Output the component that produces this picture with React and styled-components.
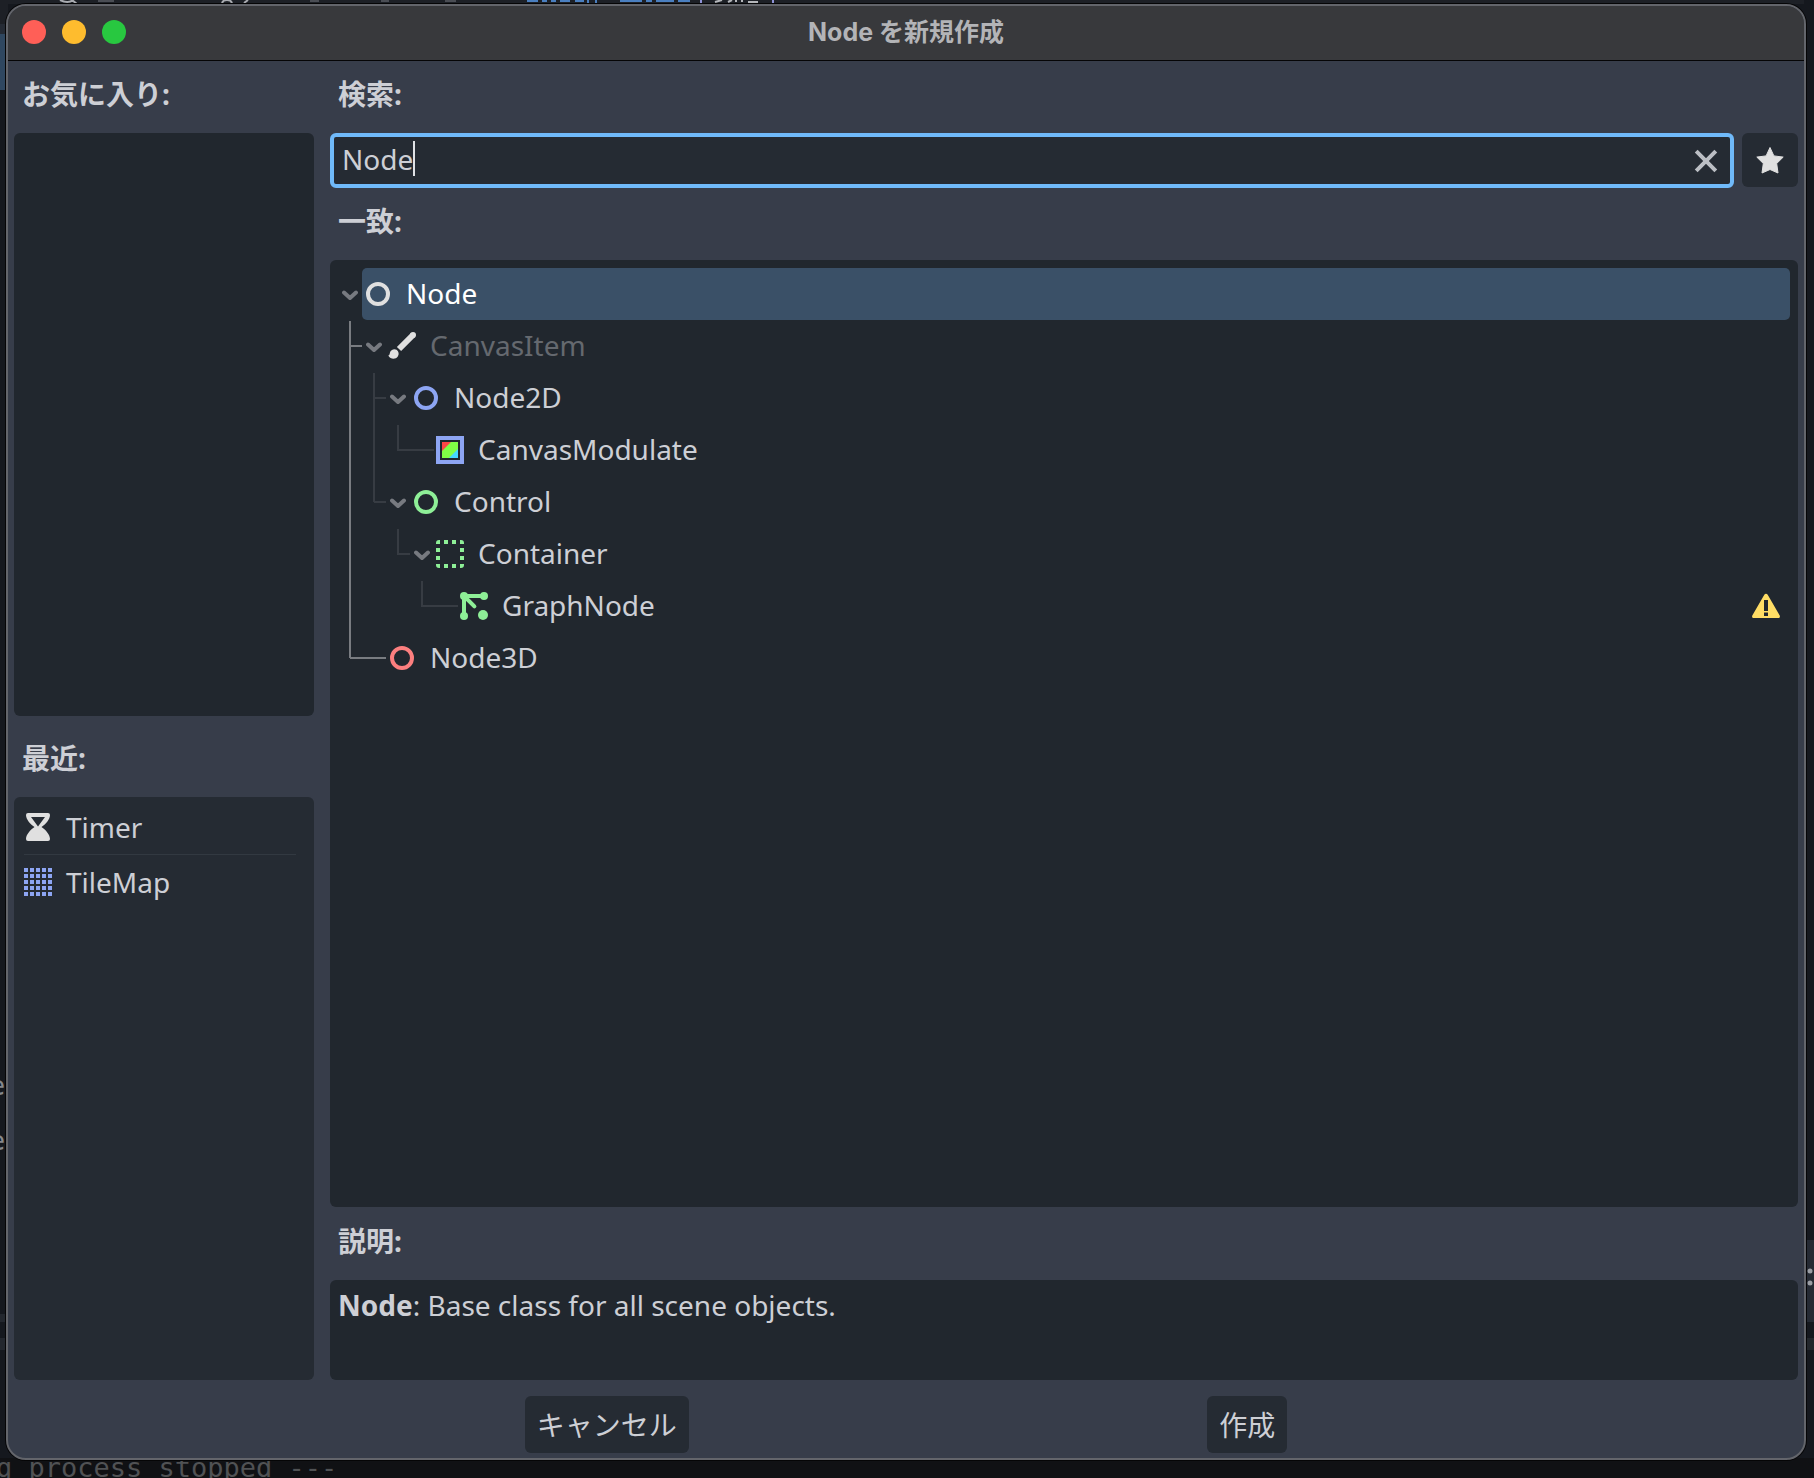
import React, { useState } from "react";
import styled, { createGlobalStyle } from "styled-components";

const GlobalStyle = createGlobalStyle`
  * {
    box-sizing: border-box;
  }

  body {
    margin: 0;
    background: #15181e;
    color: #cdcfd5;
    font-family: "Noto Sans", "Noto Sans CJK JP", sans-serif;
    font-size: 28px;
    line-height: 38px;
  }

  button,
  input {
    font: inherit;
    color: inherit;
  }

  ul {
    list-style: none;
    margin: 0;
    padding: 0;
  }
`;

const Desktop = styled.div`
  display: grid;
  min-height: 100vh;
  overflow: hidden;
`;

// the editor behind the dialog, only its edges can be seen
const Backdrop = styled.div`
  grid-area: 1 / 1;
  display: grid;
  grid-template-columns: 8px 1fr 10px;
  grid-template-rows: 1fr 20px;
  min-width: 0;
  background: #15181e;
`;

const EdgeColumn = styled.div`
  display: flex;
  flex-direction: column;
  overflow: hidden;
`;

const Strip = styled.div`
  flex: none;
  height: ${(p) => p.$height}px;
  overflow: hidden;
  background: ${(p) => p.$color || "transparent"};
  color: #85888d;
  font-family: "DejaVu Sans Mono", monospace;
  font-size: 27px;
  line-height: 34px;
  text-indent: -11px;
`;

const Console = styled.div`
  grid-column: 1 / -1;
  height: 20px;
  overflow: hidden;
  background: #101114;
  color: #505254;
  font-family: "DejaVu Sans Mono", monospace;
  font-size: 27px;
  line-height: 20px;
  white-space: pre;
  text-indent: -4px;
`;

const WindowArea = styled.div`
  grid-area: 1 / 1;
  z-index: 1;
  display: flex;
  min-width: 0;
  padding: 4px 8px 18px 6px;
`;

const Window = styled.main`
  flex: 1;
  min-width: 0;
  display: flex;
  flex-direction: column;
  overflow: hidden;
  border: 2px solid #63656b;
  border-radius: 20px;
  background: #373d4a;
  box-shadow: 0 0 0 1px #050506;
`;

const TitleBar = styled.header`
  display: grid;
  grid-template-columns: 1fr auto 1fr;
  align-items: center;
  height: 55px;
  padding: 0 14px 2px;
  border-bottom: 1px solid #050506;
  background: #38393c;
`;

const Lights = styled.div`
  display: flex;
  gap: 16px;
`;

const Light = styled.button`
  width: 24px;
  height: 24px;
  padding: 0;
  border: 0;
  border-radius: 50%;
  background: ${(p) => p.$color};
`;

const Title = styled.h1`
  margin: 0;
  color: #b3b4b7;
  font-family: Inter, "Noto Sans CJK JP", sans-serif;
  font-size: 25px;
  font-weight: 700;
  line-height: 32px;
`;

const Body = styled.div`
  flex: 1;
  display: grid;
  grid-template-columns: 300px 1fr;
  column-gap: 16px;
  padding: 7px 6px 0;
`;

const Column = styled.div`
  display: flex;
  flex-direction: column;
  gap: 8px;
  min-width: 0;
`;

const Section = styled.section`
  flex: 1 1 0;
  display: flex;
  flex-direction: column;
  gap: 8px;

  & + & {
    padding-top: 8px;
    flex-basis: 8px;
  }
`;

const Label = styled.label`
  display: block;
  height: 57px;
  margin: 0;
  padding: 7px 8px 0;
  font-size: 28px;
  font-weight: 700;
  line-height: 38px;
`;

const Panel = styled.div`
  flex: 1;
  border-radius: 6px;
  background: ${(p) => (p.$light ? "#252b33" : "#21272e")};
`;

const RecentList = styled.ul`
  padding: 3px 18px 0 10px;
`;

const RecentItem = styled.li`
  display: flex;
  align-items: center;
  gap: 14px;
  height: 54px;

  & + & {
    height: 55px;
    border-top: 1px solid #323941;
  }
`;

const SearchRow = styled.div`
  display: flex;
  gap: 8px;
  height: 54px;
`;

const SearchBox = styled.div`
  flex: 1;
  display: flex;
  align-items: center;
  height: 55px;
  min-width: 0;
  padding: 0 10px 4px 8px;
  border: 4px solid #70bafa;
  border-radius: 6px;
  background: #252b33;
`;

const SearchInput = styled.input`
  field-sizing: content;
  min-width: 1px;
  padding: 0;
  border: 0;
  outline: 0;
  background: none;
  caret-color: transparent;
`;

const Caret = styled.span`
  width: 2px;
  height: 35px;
  background: #e0e2e6;
`;

const ClearButton = styled.button`
  display: flex;
  margin-left: auto;
  padding: 4px 0 0;
  border: 0;
  background: none;
`;

const FavoriteButton = styled.button`
  display: flex;
  align-items: center;
  justify-content: center;
  width: 56px;
  height: 54px;
  padding: 0;
  border: 0;
  border-radius: 6px;
  background: #252b33;
`;

const TreePanel = styled(Panel)`
  padding: 8px;
`;

const Branch = styled.ul`
  padding-left: 24px;
`;

const TreeItem = styled.li`
  position: relative;

  /* vertical guide, stops in the middle of the row for the last child */
  ${Branch} > &::before {
    content: "";
    position: absolute;
    left: -13px;
    top: ${(p) => (p.$first ? 1 : 0)}px;
    width: 2px;
    height: ${(p) => (p.$last ? "26px" : "100%")};
    background: ${(p) => (p.$active ? "#797c81" : "#373c43")};
  }

  /* horizontal guide to the arrow or to the icon */
  ${Branch} > &::after {
    content: "";
    position: absolute;
    left: -12px;
    top: 25px;
    width: ${(p) => (p.$leaf ? 36 : 12)}px;
    height: 2px;
    background: ${(p) => (p.$active ? "#797c81" : "#373c43")};
  }
`;

const TreeRow = styled.div`
  display: flex;
  height: 52px;
`;

const Arrow = styled.button`
  display: flex;
  align-items: center;
  justify-content: center;
  width: 24px;
  padding: 0;
  border: 0;
  background: none;
  visibility: ${(p) => (p.$hidden ? "hidden" : "visible")};
`;

const RowContent = styled.div`
  flex: 1;
  display: flex;
  align-items: center;
  gap: 14px;
  padding: 0 10px 0 2px;
  border-radius: 5px;
  background: ${(p) => (p.$selected ? "#3a5067" : "transparent")};
  color: ${(p) => (p.$selected ? "#ffffff" : p.$disabled ? "#65696f" : "#cdcfd5")};
`;

const RowName = styled.span`
  flex: 1;
  padding-bottom: 2px;
`;

const Description = styled.p`
  height: 100px;
  margin: 0;
  padding: 6px 8px;
  border-radius: 6px;
  background: #21272e;
`;

const Footer = styled.footer`
  display: flex;
  gap: 8px;
  padding: 16px 6px 5px;

  &::before,
  &::after {
    content: "";
    flex: 1;
  }
`;

const Spacer = styled.span`
  flex: 1;
`;

const DialogButton = styled.button`
  height: 57px;
  padding: 0 12px;
  border: 0;
  border-radius: 6px;
  background: #252b33;
`;

const Svg = styled.svg`
  display: block;
  flex: none;
`;

const Icon = ({ children }) => (
  <Svg width="28" height="28" viewBox="0 0 28 28" aria-hidden="true">
    {children}
  </Svg>
);

const Ring = ({ color }) => (
  <Icon>
    <circle cx="14" cy="14" r="10" fill="none" stroke={color} strokeWidth="4" />
  </Icon>
);

const BrushIcon = () => (
  <Icon>
    <circle cx="25" cy="3" r="3" fill="#e0e0e0" />
    <path d="M25 3 11 17" stroke="#e0e0e0" strokeWidth="6" />
    <path
      fill="#e0e0e0"
      d="M.3 23.6C2 23.4 1.5 21.4 2.4 19.6 3.4 17.4 6.4 16.4 8.6 17.8 10.9 19.3 11.3 22.4 9.8 24.6 7.7 27.7 2.4 27.7.3 23.6Z"
    />
  </Icon>
);

const ModulateIcon = () => (
  <Icon>
    <path fill="#8da5f3" fillRule="evenodd" d="M0 0H28V28H0ZM4 4V24H24V4Z" />
    <path fill="#80ff45" d="M6 6H22V22H6Z" />
    <path fill="#ff4545" d="M6 6H15L6 15Z" />
    <path fill="#45d7ff" d="M22 13V22H13Z" />
  </Icon>
);

const ContainerIcon = () => (
  <Icon>
    <path
      fill="#8eef97"
      d="M3 0H4V4H0V3A3 3 0 0 1 3 0ZM8 0H12V4H8ZM16 0H20V4H16ZM24 0H25A3 3 0 0 1 28 3V4H24ZM0 8H4V12H0ZM24 8H28V12H24ZM0 16H4V20H0ZM24 16H28V20H24ZM0 24H4V28H3A3 3 0 0 1 0 25ZM8 24H12V28H8ZM16 24H20V28H16ZM24 24H28V25A3 3 0 0 1 25 28H24Z"
    />
  </Icon>
);

const GraphIcon = () => (
  <Icon>
    <g fill="#8eef97">
      <circle cx="4" cy="4" r="4" />
      <circle cx="24" cy="4" r="4" />
      <circle cx="4" cy="24" r="4" />
      <circle cx="23" cy="23" r="5" />
    </g>
    <path d="M24 4H4V24M4 4 14.4 14.4" fill="none" stroke="#8eef97" strokeWidth="4" strokeLinecap="round" />
  </Icon>
);

const TimerIcon = () => (
  <Icon>
    <path
      fill="#e0e0e0"
      fillRule="evenodd"
      d="M4 0H24Q26 0 26 2C26 6 22 11 17.5 14 22 17 26 22 26 26Q26 28 24 28H4Q2 28 2 26C2 22 6 17 10.5 14 6 11 2 6 2 2Q2 0 4 0ZM7 4 14 13.5 21 4Z"
    />
  </Icon>
);

const TILES = [0, 6, 12, 18, 24];

const TileMapIcon = () => (
  <Icon>
    {TILES.map((y) =>
      TILES.map((x) => <rect key={`${x}-${y}`} x={x} y={y} width="4" height="4" fill="#8da5f3" />)
    )}
  </Icon>
);

const WarningIcon = () => (
  <Icon>
    <path
      fill="#ffdd65"
      fillRule="evenodd"
      d="M14 1.7C14.7 1.7 15.3 2 15.7 2.7L27.7 23.5C28.3 24.7 27.6 26 26.3 26H1.7C.4 26-.3 24.7.3 23.5L12.3 2.7C12.7 2 13.3 1.7 14 1.7ZM12 8V19H16V8ZM12 20.5V24H16V20.5Z"
    />
  </Icon>
);

const ArrowIcon = () => (
  <Svg width="16" height="16" viewBox="0 0 16 16" aria-hidden="true">
    <path
      d="M2 6.5 8 12 14 6.5"
      fill="none"
      stroke="#777a80"
      strokeWidth="4"
      strokeLinecap="round"
      strokeLinejoin="round"
    />
  </Svg>
);

const CloseIcon = () => (
  <Icon>
    <path d="M4.2 4.2 23.8 23.8M23.8 4.2 4.2 23.8" stroke="#bbbec4" strokeWidth="4" />
  </Icon>
);

const StarIcon = () => (
  <Icon>
    <path
      fill="#e0e0e0"
      stroke="#e0e0e0"
      strokeWidth="1"
      strokeLinejoin="round"
      d="M14 1.5 17.9 9.9 27.2 11.1 20.7 17.5 22 27 14 23.5 6 27 7.3 17.5.8 11.1 10.1 9.9Z"
    />
  </Icon>
);

// lower edge of the toolbar and the code line
const ToolbarEdge = () => (
  <Svg width="800" height="4" viewBox="8 0 800 4">
    <path d="M60 0Q68 4 73 0M72 0 77 4M222 3Q223 0 227 0T232 3M244 3 248 0" fill="none" stroke="#a9abb0" strokeWidth="2" />
    <path d="M98 1H114M310 1H319M381 1H389M445 1H456" stroke="#4a4d54" strokeWidth="2" />
    <path
      d="M527 1H538M542 1H547M551 1H556M560 1H570M575 1H584M588 0V3M596 0V3M620 1H642M646 1H652M656 1H674M678 1H690"
      stroke="#4a7fc0"
      strokeWidth="2"
    />
    <path d="M701 0V3M773 0V3" stroke="#8f93d8" strokeWidth="2" />
    <path d="M715 2 722 0M728 2 732 0M736 0V2M742 0V2M748 2H758" stroke="#b5b7bb" strokeWidth="2" />
  </Svg>
);

const MenuDots = () => (
  <Svg width="10" height="82" viewBox="0 0 10 82">
    <circle cx="6" cy="31" r="2.5" fill="#9a9da3" />
    <circle cx="6" cy="43" r="2.5" fill="#9a9da3" />
  </Svg>
);

const tree = [
  {
    name: "Node",
    icon: <Ring color="#e0e0e0" />,
    selected: true,
    children: [
      {
        name: "CanvasItem",
        icon: <BrushIcon />,
        disabled: true,
        children: [
          {
            name: "Node2D",
            icon: <Ring color="#8da5f3" />,
            children: [{ name: "CanvasModulate", icon: <ModulateIcon /> }],
          },
          {
            name: "Control",
            icon: <Ring color="#8eef97" />,
            children: [
              {
                name: "Container",
                icon: <ContainerIcon />,
                children: [{ name: "GraphNode", icon: <GraphIcon />, warning: true }],
              },
            ],
          },
        ],
      },
      { name: "Node3D", icon: <Ring color="#fc7f7f" /> },
    ],
  },
];

const recent = [
  { name: "Timer", icon: <TimerIcon /> },
  { name: "TileMap", icon: <TileMapIcon /> },
];

const TreeNodes = ({ nodes, active }) =>
  nodes.map((node, i) => (
    <TreeItem
      key={node.name}
      role="treeitem"
      aria-selected={!!node.selected}
      $active={active}
      $first={i === 0}
      $last={i === nodes.length - 1}
      $leaf={!node.children}
    >
      <TreeRow>
        <Arrow $hidden={!node.children} aria-label="折りたたむ">
          <ArrowIcon />
        </Arrow>
        <RowContent $selected={node.selected} $disabled={node.disabled}>
          {node.icon}
          <RowName>{node.name}</RowName>
          {node.warning && <WarningIcon />}
        </RowContent>
      </TreeRow>
      {node.children && (
        <Branch role="group">
          <TreeNodes nodes={node.children} active={node.selected} />
        </Branch>
      )}
    </TreeItem>
  ));

const App = () => {
  const [search, setSearch] = useState("Node");

  return (
    <Desktop>
      <GlobalStyle />
      <Backdrop aria-hidden="true">
        <EdgeColumn>
          <Strip $height={24} $color="#1d2026" />
          <Strip $height={10} $color="#252b35" />
          <Strip $height={56} $color="#2f4760" />
          <Strip $height={979} />
          <Strip $height={55}>e</Strip>
          <Strip $height={190}>e</Strip>
          <Strip $height={8} $color="#23272e" />
          <Strip $height={16} />
          <Strip $height={12} $color="#23272e" />
        </EdgeColumn>
        <Strip $height={4} $color="#1d2026">
          <ToolbarEdge />
        </Strip>
        <EdgeColumn>
          <Strip $height={1240} />
          <Strip $height={82} $color="#252a33">
            <MenuDots />
          </Strip>
          <Strip $height={16} />
          <Strip $height={12} $color="#23272c" />
        </EdgeColumn>
        <Console>g process stopped ---</Console>
      </Backdrop>

      <WindowArea>
        <Window>
          <TitleBar>
            <Lights>
              <Light $color="#ff5f57" aria-label="閉じる" />
              <Light $color="#febc2e" aria-label="しまう" />
              <Light $color="#28c840" aria-label="拡大" />
            </Lights>
            <Title>Node を新規作成</Title>
          </TitleBar>

          <Body>
            <Column>
              <Section>
                <Label as="h2">お気に入り:</Label>
                <Panel />
              </Section>
              <Section>
                <Label as="h2">最近:</Label>
                <Panel $light>
                  <RecentList>
                    {recent.map((item) => (
                      <RecentItem key={item.name}>
                        {item.icon}
                        <span>{item.name}</span>
                      </RecentItem>
                    ))}
                  </RecentList>
                </Panel>
              </Section>
            </Column>

            <Column>
              <Label htmlFor="search">検索:</Label>
              <SearchRow>
                <SearchBox>
                  <SearchInput id="search" value={search} onChange={(e) => setSearch(e.target.value)} />
                  <Caret />
                  <ClearButton aria-label="クリア" onClick={() => setSearch("")}>
                    <CloseIcon />
                  </ClearButton>
                </SearchBox>
                <FavoriteButton aria-label="お気に入り">
                  <StarIcon />
                </FavoriteButton>
              </SearchRow>
              <Label as="h2">一致:</Label>
              <TreePanel>
                <ul role="tree">
                  <TreeNodes nodes={tree} />
                </ul>
              </TreePanel>
              <Label as="h2">説明:</Label>
              <Description>
                <b>Node</b>: Base class for all scene objects.
              </Description>
            </Column>
          </Body>

          <Footer>
            <DialogButton>キャンセル</DialogButton>
            <Spacer />
            <DialogButton>作成</DialogButton>
          </Footer>
        </Window>
      </WindowArea>
    </Desktop>
  );
};

export default App;
